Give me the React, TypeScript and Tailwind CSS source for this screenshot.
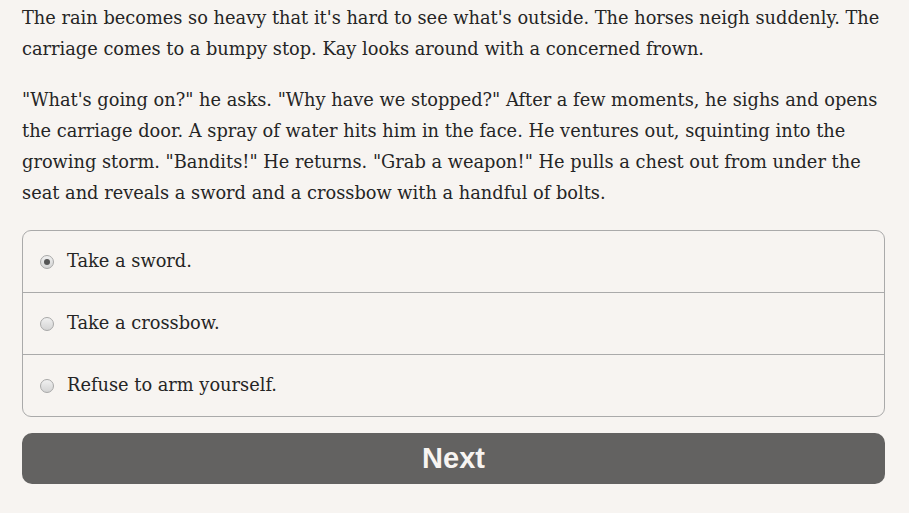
import { useState } from "react";

const choices = ["Take a sword.", "Take a crossbow.", "Refuse to arm yourself."];

export default function App() {
  const [selected, setSelected] = useState(0);

  return (
    <div
      className="min-h-screen bg-[#f7f4f1] text-[#252525] pl-[22px] pr-[24px] pt-[2px]"
      style={{ fontFamily: '"DejaVu Serif", Georgia, serif' }}
    >
      <div className="mr-[-8px] text-[17.8px] leading-[31px]">
        <p className="mb-[20px]">
          The rain becomes so heavy that it's hard to see what's outside. The horses neigh suddenly. The
          carriage comes to a bumpy stop. Kay looks around with a concerned frown.
        </p>
        <p>
          "What's going on?" he asks. "Why have we stopped?" After a few moments, he sighs and opens the
          carriage door. A spray of water hits him in the face. He ventures out, squinting into the growing
          storm. "Bandits!" He returns. "Grab a weapon!" He pulls a chest out from under the seat and
          reveals a sword and a crossbow with a handful of bolts.
        </p>
      </div>

      {/* Choices */}
      <div className="mt-[22px] border border-[#aaaaaa] rounded-[9px] overflow-hidden">
        {choices.map((c, i) => (
          <label
            key={c}
            onClick={() => setSelected(i)}
            className={`flex items-center pl-[17px] cursor-pointer ${
              i > 0 ? "h-[62px] border-t border-[#aaaaaa]" : "h-[61px]"
            }`}
          >
            <span className="w-[14px] h-[14px] rounded-full border border-[#a8a8a8] bg-gradient-to-b from-[#f0f0f0] to-[#d4d4d4] flex items-center justify-center">
              {selected === i && <span className="w-[6px] h-[6px] rounded-full bg-[#555]" />}
            </span>
            <span className="ml-[13px] text-[17.8px]">{c}</span>
          </label>
        ))}
      </div>

      <button
        className="mt-[16px] w-full h-[51px] rounded-[10px] bg-[#636261] text-[#f7f4f1] text-[29px] font-bold"
        style={{ fontFamily: '"Liberation Sans", Arial, sans-serif' }}
      >
        Next
      </button>
    </div>
  );
}
